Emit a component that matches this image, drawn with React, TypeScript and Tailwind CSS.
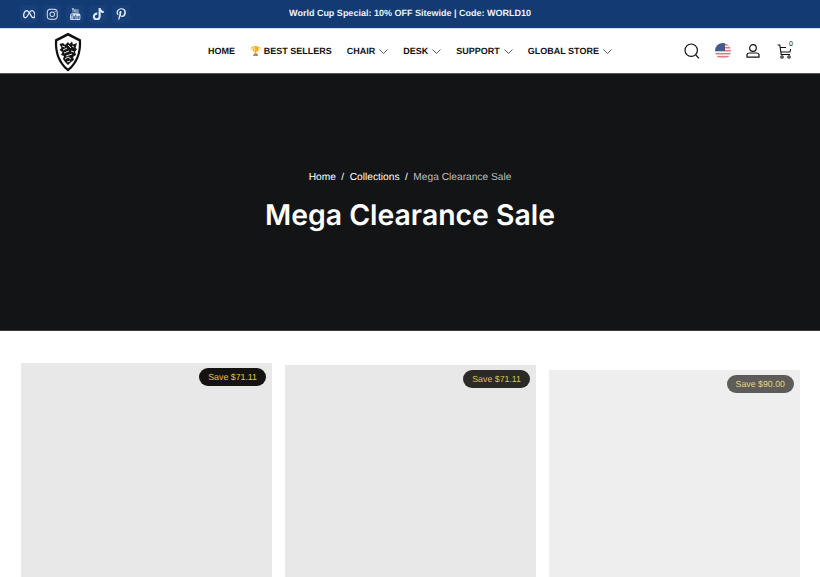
import { FaInstagram, FaMeta, FaPinterestP, FaTiktok } from 'react-icons/fa6'
import { TfiYoutube } from 'react-icons/tfi'

const socials = [FaMeta, FaInstagram, TfiYoutube, FaTiktok, FaPinterestP]

const navItems = ['CHAIR', 'DESK', 'SUPPORT', 'GLOBAL STORE']

const Logo = () => (
  <svg width="28" height="40" viewBox="0 0 28 40" aria-label="logo">
    <path d="M14 0.8 L27 7.5 C28 20 24 32 14 39.5 C4 32 0 20 1 7.5 Z" fill="#111" />
    <path d="M14 3.8 L24.8 9.3 C25.5 20 22 30 14 36.6 C6 30 2.5 20 3.2 9.3 Z" fill="#fff" />
    <path d="M5.5 12 L9 11 L11 13 L14 10 L15.5 12 L18 9.5 L19 12.5 L23 11 L21.5 16 L23 17 L21 20 L22 23 L19 25 L20 28 L17 30 L14 33 L11 30 L9 27 L10 24 L7 23 L8.5 20 L5.5 18 L7.5 16 Z" fill="#161616" />
    <path d="M8 14 L11 15 M9 18 L13 16 M14 13 L17 16 M18 14 L20 15 M10 21 L15 19 M17 19 L20 20 M12 24 L18 22 M11 27 L14 25 L17 27 M13 30 L16 29" stroke="#e8e8e8" strokeWidth="1" fill="none" />
  </svg>
)

const Flag = () => (
  <svg width="16" height="16" viewBox="0 0 16 16">
    <defs>
      <clipPath id="flag-clip">
        <circle cx="8" cy="8" r="8" />
      </clipPath>
    </defs>
    <g clipPath="url(#flag-clip)">
      <rect width="16" height="16" fill="#f5eeee" />
      <rect y="1" width="16" height="1.4" fill="#dc7a86" />
      <rect y="4" width="16" height="1.4" fill="#dc7a86" />
      <rect y="7" width="16" height="1.4" fill="#dc7a86" />
      <rect y="10" width="16" height="1.4" fill="#dc7a86" />
      <rect y="13" width="16" height="1.4" fill="#dc7a86" />
      <rect width="10" height="8" fill="#46598f" />
    </g>
  </svg>
)

const SearchIcon = () => (
  <svg width="16" height="16" viewBox="0 0 16 16" fill="none" stroke="#111" strokeWidth="1.2">
    <circle cx="7.2" cy="7.2" r="6.2" />
    <path d="M11.8 12 L15 15.4" />
  </svg>
)

const UserIcon = () => (
  <svg width="14" height="14" viewBox="0 0 14 14" fill="none" stroke="#111" strokeWidth="1.2">
    <circle cx="7" cy="4" r="3.3" />
    <path d="M1 13.2 V11 C1 9.8 2 9 3.5 9 H10.5 C12 9 13 9.8 13 11 V13.2 Z" />
  </svg>
)

const CartIcon = () => (
  <svg width="15" height="15" viewBox="0 0 15 15" fill="none" stroke="#111" strokeWidth="1.1">
    <path d="M0.5 1 H2.8 L4.2 10.5 H13" />
    <path d="M3.2 3.5 H9 M13.6 5 L13 8 H3.9" />
    <circle cx="5" cy="13" r="1.2" />
    <circle cx="12" cy="13" r="1.2" />
  </svg>
)

const Chevron = () => (
  <svg width="9" height="5" viewBox="0 0 9 5" fill="none" stroke="#333" strokeWidth="0.8" className="mb-[1px]">
    <path d="M0.5 0.5 L4.5 4.5 L8.5 0.5" />
  </svg>
)

const SaveBadge = ({ text, className }: { text: string; className: string }) => (
  <span className={`absolute right-[6px] top-[5px] flex h-[18px] items-center rounded-full px-[9px] pt-[1px] text-[8.8px] ${className}`}>
    {text}
  </span>
)

export default function App() {
  return (
    <div className="h-[577px] overflow-hidden bg-white font-['Liberation_Sans',sans-serif] [text-rendering:geometricPrecision]">
      <div className="relative flex h-[29px] items-center justify-center border-b border-[#cfe0ee] bg-[#133a73]">
        <div className="absolute left-[20px] top-[5px] flex gap-[5px]">
          {socials.map((Icon, i) => (
            <span key={i} className="flex h-[18px] w-[18px] items-center justify-center rounded-[3px] bg-[#17407a] text-[12.5px] text-[#dfe8f2]">
              <Icon />
            </span>
          ))}
        </div>
        <p className="text-[9px] font-bold text-[#eef2f7]">World Cup Special: 10% OFF Sitewide | Code: WORLD10</p>
      </div>

      <header className="flex h-[45px] items-center border-b border-[#555] bg-white pr-[28px]">
        <div className="ml-[54px] w-[154px] pt-[1px]">
          <Logo />
        </div>
        <nav className="flex items-center gap-[15px] pt-[2px] text-[9px] font-bold text-[#111]">
          <a>HOME</a>
          <a>🏆 BEST SELLERS</a>
          {navItems.map((label) => (
            <a key={label} className="flex items-center gap-[4px]">
              {label}
              <Chevron />
            </a>
          ))}
        </nav>
        <div className="ml-auto flex items-center">
          <SearchIcon />
          <span className="ml-[15px]">
            <Flag />
          </span>
          <span className="ml-[15px]">
            <UserIcon />
          </span>
          <span className="relative ml-[17px]">
            <CartIcon />
            <span className="absolute -right-[1px] -top-[3px] text-[7px] leading-none text-[#111]">0</span>
          </span>
        </div>
      </header>

      <section className="flex h-[257px] flex-col items-center justify-center gap-[10px] border-b border-[#3a3a34] bg-[#131416]">
        <div className="flex gap-[5.5px] text-[10.2px] text-white">
          <span>Home</span>
          <span>/</span>
          <span>Collections</span>
          <span>/</span>
          <span className="text-[#bdbdbd]">Mega Clearance Sale</span>
        </div>
        <h1 className="font-['Inter',sans-serif] text-[28.4px] font-semibold leading-[38px] text-white">Mega Clearance Sale</h1>
      </section>

      <div className="grid grid-cols-3 items-start gap-[13px] pl-[21px] pr-[20px] pt-[32px]">
        <div className="relative h-[300px] bg-[#e8e8e8]">
          <SaveBadge text="Save $71.11" className="bg-[#14130f] text-[#e2c64a]" />
        </div>
        <div className="relative mt-[2px] h-[300px] bg-[#e8e8e8]">
          <SaveBadge text="Save $71.11" className="bg-[#2b2a26] text-[#dcc455]" />
        </div>
        <div className="relative mt-[7px] h-[300px] rounded-[1px] bg-[#eeeeee]">
          <SaveBadge text="Save $90.00" className="bg-[#5d5c59] text-[#e6d681]" />
        </div>
      </div>
    </div>
  )
}
